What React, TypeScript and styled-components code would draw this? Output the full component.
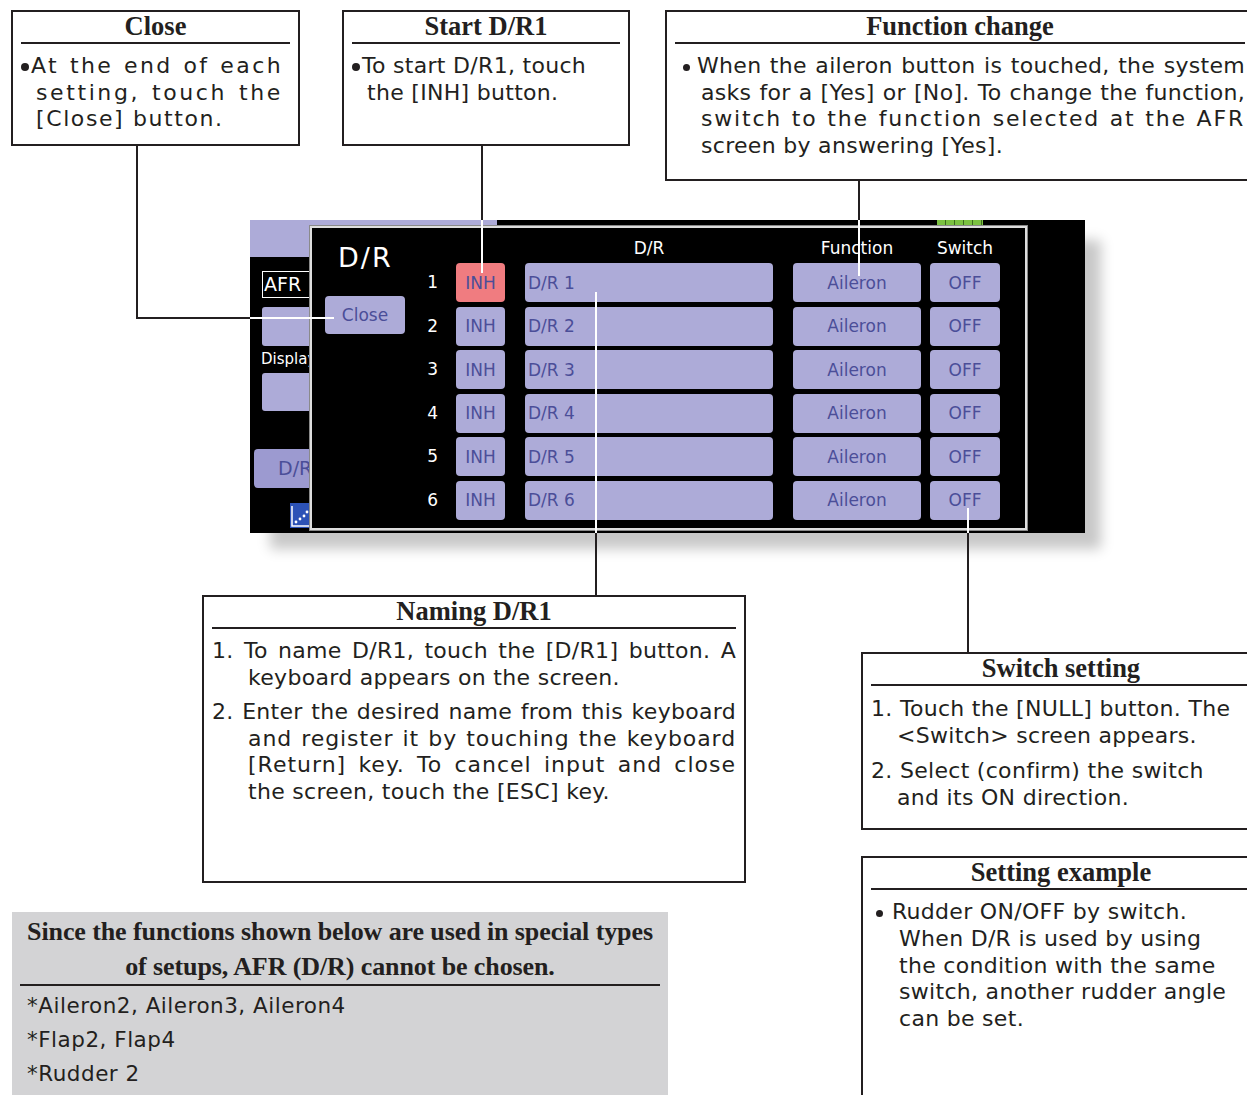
import React from 'react';
import styled, { createGlobalStyle } from 'styled-components';

const GlobalStyle = createGlobalStyle`
  html, body {
    margin: 0;
    padding: 0;
    background: #fff;
    overflow: hidden;
  }
  body {
    font-family: "DejaVu Sans", "Liberation Sans", sans-serif;
    color: #231f20;
  }
`;

const INK = '#231f20';
const LAV = '#adabd8';
const KEY_TEXT = '#4b4e98';

const Page = styled.div`
  position: relative;
  width: 1247px;
  height: 1095px;
  overflow: hidden;
  background: #fff;
`;

// callout boxes sit on the diagram canvas at their place
const Callout = styled.section<{ $x: number; $y: number; $w: number; $h: number }>`
  position: absolute;
  left: ${p => p.$x}px;
  top: ${p => p.$y}px;
  width: ${p => p.$w}px;
  height: ${p => p.$h}px;
  box-sizing: border-box;
  border: 2px solid ${INK};
  background: #fff;
  padding: 0 8px;
`;

const CalloutTitle = styled.h3`
  margin: 0;
  height: 30px;
  line-height: 29px;
  font-family: "Liberation Serif", serif;
  font-weight: 700;
  font-size: 26.5px;
  text-align: center;
  color: ${INK};
  border-bottom: 2px solid ${INK};
`;

const Body = styled.div<{ $pr?: number; $lh?: number; $ls?: number }>`
  padding-top: 9px;
  padding-right: ${p => p.$pr ?? 0}px;
  font-size: 22px;
  letter-spacing: ${p => p.$ls ?? 0.3}px;
  line-height: ${p => p.$lh ?? 26.5}px;
`;

const Item = styled.div`
  & + & {
    margin-top: 8px;
  }
`;

const Line = styled.div<{ $justify?: boolean; $indent?: number; $ls?: number }>`
  white-space: nowrap;
  padding-left: ${p => p.$indent ?? 0}px;
  text-align: ${p => (p.$justify ? 'justify' : 'left')};
  text-align-last: ${p => (p.$justify ? 'justify' : 'left')};
  ${p => (p.$ls !== undefined ? `letter-spacing: ${p.$ls}px;` : '')}
`;

const Dot = styled.span<{ $gap: number; $size?: number }>`
  display: inline-block;
  width: ${p => p.$size ?? 8}px;
  height: ${p => p.$size ?? 8}px;
  border-radius: 50%;
  background: ${INK};
  margin-right: ${p => p.$gap}px;
  vertical-align: 2px;
`;

const Note = styled.section`
  position: absolute;
  left: 12px;
  top: 912px;
  width: 656px;
  height: 200px;
  box-sizing: border-box;
  background: #d3d3d5;
  padding: 1.5px 8px 0;
`;

const NoteTitle = styled.h3`
  margin: 0;
  font-family: "Liberation Serif", serif;
  font-weight: 700;
  font-size: 26px;
  line-height: 35px;
  text-align: center;
  letter-spacing: -0.1px;
  color: ${INK};
  border-bottom: 2px solid ${INK};
  white-space: nowrap;
`;

const NoteList = styled.ul`
  list-style: none;
  margin: 0;
  padding: 3.5px 0 0 7px;
  font-size: 21.5px;
  line-height: 34px;
  letter-spacing: 0.5px;
`;

/* ---------- device screen ---------- */

const Screen = styled.div`
  position: absolute;
  left: 250px;
  top: 220px;
  width: 835px;
  height: 313px;
  background: #000;
  box-shadow: 18px 18px 12px -2px rgba(0, 0, 0, 0.22);
  font-family: "DejaVu Sans", sans-serif;
`;

const TopRow = styled.div`
  display: flex;
  align-items: flex-start;
  height: 37px;
`;

const TopStrip = styled.div`
  width: 247px;
  height: 37px;
  background: ${LAV};
`;

const StatusLed = styled.div`
  margin-left: 440px;
  width: 46px;
  height: 6px;
  background: repeating-linear-gradient(90deg, #7cc242 0 8px, #3d6b20 8px 9px);
`;

const SideCol = styled.div`
  display: flex;
  flex-direction: column;
  align-items: flex-start;
  padding-left: 12px;
  width: 110px;
`;

const AfrBox = styled.div`
  margin-top: 14px;
  width: 70px;
  height: 27px;
  box-sizing: border-box;
  border: 1px solid #fff;
  color: #fff;
  font-size: 19px;
  line-height: 25px;
  padding-left: 1px;
`;

const SideBlock = styled.div<{ $h: number; $mt: number }>`
  margin-top: ${p => p.$mt}px;
  width: 90px;
  height: ${p => p.$h}px;
  border-radius: 3px;
  background: ${LAV};
`;

const DisplayLabel = styled.div`
  margin-top: 4px;
  color: #fff;
  font-size: 15px;
  line-height: 18px;
  margin-left: -1px;
`;

const DrTab = styled.div`
  margin-top: 38px;
  margin-left: -8px;
  width: 100px;
  height: 39px;
  border-radius: 4px;
  background: #9c9ad0;
  color: ${KEY_TEXT};
  font-size: 19px;
  line-height: 39px;
  padding-left: 24px;
  box-sizing: border-box;
`;

const ChartIcon = styled.svg`
  margin-top: 15px;
  margin-left: 28px;
  display: block;
`;

const Popup = styled.div`
  position: absolute;
  left: 60px;
  top: 6px;
  width: 717px;
  height: 304px;
  box-sizing: border-box;
  border: 2px solid #dedede;
  outline: 1px solid #8a8a8a;
  background: #000;
  display: flex;
`;

const PopupSide = styled.div`
  width: 96px;
  flex: none;
  display: flex;
  flex-direction: column;
  align-items: flex-start;
  padding: 15px 0 0 13px;
  box-sizing: border-box;
`;

const PopupTitle = styled.div`
  margin-left: 13px;
  color: #fff;
  font-size: 27px;
  line-height: 30px;
  letter-spacing: 2px;
`;

const Table = styled.div`
  display: flex;
  flex-direction: column;
  gap: 4.5px;
`;

const Row = styled.div<{ $head?: boolean }>`
  display: grid;
  grid-template-columns: 28px 49px 248px 128px 70px;
  column-gap: 20px;
  height: ${p => (p.$head ? 30.5 : 39)}px;
`;

const HeadCell = styled.div<{ $shift?: boolean }>`
  align-self: end;
  margin-bottom: 1px;
  margin-left: ${p => (p.$shift ? -11 : 0)}px;
  margin-right: ${p => (p.$shift ? 11 : 0)}px;
  color: #fff;
  font-size: 17px;
  line-height: 20px;
  text-align: center;
`;

const RowNum = styled.div`
  color: #fff;
  font-size: 17px;
  line-height: 39px;
  text-align: right;
  margin-right: -2px;
`;

const Key = styled.div<{ $red?: boolean; $left?: boolean; $shift?: boolean; $w?: number; $h?: number }>`
  display: flex;
  align-items: center;
  justify-content: ${p => (p.$left ? 'flex-start' : 'center')};
  padding-left: ${p => (p.$left ? 3 : 0)}px;
  margin-left: ${p => (p.$shift ? -11 : 0)}px;
  margin-right: ${p => (p.$shift ? 11 : 0)}px;
  width: ${p => (p.$w ? `${p.$w}px` : 'auto')};
  height: ${p => (p.$h ? `${p.$h}px` : 'auto')};
  box-sizing: border-box;
  border-radius: 4px;
  background: ${p => (p.$red ? '#f07c80' : LAV)};
  color: ${KEY_TEXT};
  font-size: 17px;
`;

const CloseKey = styled(Key)`
  margin-top: 23px;
`;

const Wires = styled.svg`
  position: absolute;
  left: 0;
  top: 0;
  z-index: 2;
  pointer-events: none;
`;

const rows = [1, 2, 3, 4, 5, 6];

export default function App() {
  return (
    <>
      <GlobalStyle />
      <Page>
        <Callout $x={11} $y={10} $w={289} $h={136}>
          <CalloutTitle>Close</CalloutTitle>
          <Body $pr={7} $ls={1.6}>
            <Line $justify $ls={2.4}>
              <Dot $gap={2} />At the end of each
            </Line>
            <Line $justify $indent={15} $ls={2.6}>setting, touch the</Line>
            <Line $indent={15}>[Close] button.</Line>
          </Body>
        </Callout>

        <Callout $x={342} $y={10} $w={288} $h={136}>
          <CalloutTitle>Start D/R1</CalloutTitle>
          <Body>
            <Line>
              <Dot $gap={2} />To start D/R1, touch
            </Line>
            <Line $indent={15}>the [INH] button.</Line>
          </Body>
        </Callout>

        <Callout $x={665} $y={10} $w={590} $h={171}>
          <CalloutTitle>Function change</CalloutTitle>
          <Body $lh={26.7}>
            <Line $justify $indent={8}>
              <Dot $gap={7} $size={7} />When the aileron button is touched, the system
            </Line>
            <Line $justify $indent={26}>asks for a [Yes] or [No]. To change the function,</Line>
            <Line $justify $indent={26} $ls={1.8}>switch to the function selected at the AFR</Line>
            <Line $indent={26}>screen by answering [Yes].</Line>
          </Body>
        </Callout>

        <Screen>
          <TopRow>
            <TopStrip />
            <StatusLed />
          </TopRow>
          <SideCol>
            <AfrBox>AFR</AfrBox>
            <SideBlock $mt={9} $h={39} />
            <DisplayLabel>Display</DisplayLabel>
            <SideBlock $mt={5} $h={38} />
            <DrTab>D/R</DrTab>
            <ChartIcon width="20" height="25" viewBox="0 0 20 25">
              <rect width="20" height="25" fill="#2c52b6" />
              <path d="M2 3 V23 H19" stroke="#fff" strokeWidth="1.5" fill="none" />
              <circle cx="6" cy="19" r="1.4" fill="#fff" />
              <circle cx="10" cy="16" r="1.4" fill="#fff" />
              <circle cx="14" cy="13" r="1.4" fill="#fff" />
              <circle cx="17" cy="9" r="1.4" fill="#fff" />
            </ChartIcon>
          </SideCol>

          <Popup>
            <PopupSide>
              <PopupTitle>D/R</PopupTitle>
              <CloseKey $w={80} $h={38}>Close</CloseKey>
            </PopupSide>
            <Table>
              <Row $head>
                <span />
                <span />
                <HeadCell>D/R</HeadCell>
                <HeadCell>Function</HeadCell>
                <HeadCell $shift>Switch</HeadCell>
              </Row>
              {rows.map(n => (
                <Row key={n}>
                  <RowNum>{n}</RowNum>
                  <Key $red={n === 1}>INH</Key>
                  <Key $left>D/R {n}</Key>
                  <Key>Aileron</Key>
                  <Key $shift>OFF</Key>
                </Row>
              ))}
            </Table>
          </Popup>
        </Screen>

        <Callout $x={202} $y={595} $w={544} $h={288}>
          <CalloutTitle>Naming D/R1</CalloutTitle>
          <Body>
            <Item>
              <Line $justify>1. To name D/R1, touch the [D/R1] button. A</Line>
              <Line $indent={36}>keyboard appears on the screen.</Line>
            </Item>
            <Item>
              <Line $justify>2. Enter the desired name from this keyboard</Line>
              <Line $justify $indent={36} $ls={0.9}>and register it by touching the keyboard</Line>
              <Line $justify $indent={36} $ls={1}>[Return] key. To cancel input and close</Line>
              <Line $indent={36}>the screen, touch the [ESC] key.</Line>
            </Item>
          </Body>
        </Callout>

        <Callout $x={861} $y={652} $w={400} $h={178}>
          <CalloutTitle>Switch setting</CalloutTitle>
          <Body $lh={27}>
            <Item>
              <Line>1. Touch the [NULL] button. The</Line>
              <Line $indent={26}>&lt;Switch&gt; screen appears.</Line>
            </Item>
            <Item>
              <Line>2. Select (confirm) the switch</Line>
              <Line $indent={26}>and its ON direction.</Line>
            </Item>
          </Body>
        </Callout>

        <Callout $x={861} $y={856} $w={400} $h={260}>
          <CalloutTitle>Setting example</CalloutTitle>
          <Body $lh={26.75}>
            <Line $indent={5}>
              <Dot $gap={9} $size={7} />Rudder ON/OFF by switch.
            </Line>
            <Line $indent={28}>When D/R is used by using</Line>
            <Line $indent={28}>the condition with the same</Line>
            <Line $indent={28}>switch, another rudder angle</Line>
            <Line $indent={28}>can be set.</Line>
          </Body>
        </Callout>

        <Note>
          <NoteTitle>
            Since the functions shown below are used in special types
            <br />
            of setups, AFR (D/R) cannot be chosen.
          </NoteTitle>
          <NoteList>
            <li>*Aileron2, Aileron3, Aileron4</li>
            <li>*Flap2, Flap4</li>
            <li>*Rudder 2</li>
          </NoteList>
        </Note>

        <Wires width="1247" height="1095" viewBox="0 0 1247 1095">
          <g stroke={INK} strokeWidth="2" fill="none">
            <path d="M137 146 V318 H250" />
            <path d="M482 146 V220" />
            <path d="M859 181 V220" />
            <path d="M596 533 V595" />
            <path d="M968 533 V652" />
          </g>
          <g stroke="#fff" strokeWidth="2" fill="none">
            <path d="M250 318 H334" />
            <path d="M482 220 V273" />
            <path d="M859 220 V276" />
            <path d="M596 292 V533" />
            <path d="M968 508 V533" />
          </g>
        </Wires>
      </Page>
    </>
  );
}
